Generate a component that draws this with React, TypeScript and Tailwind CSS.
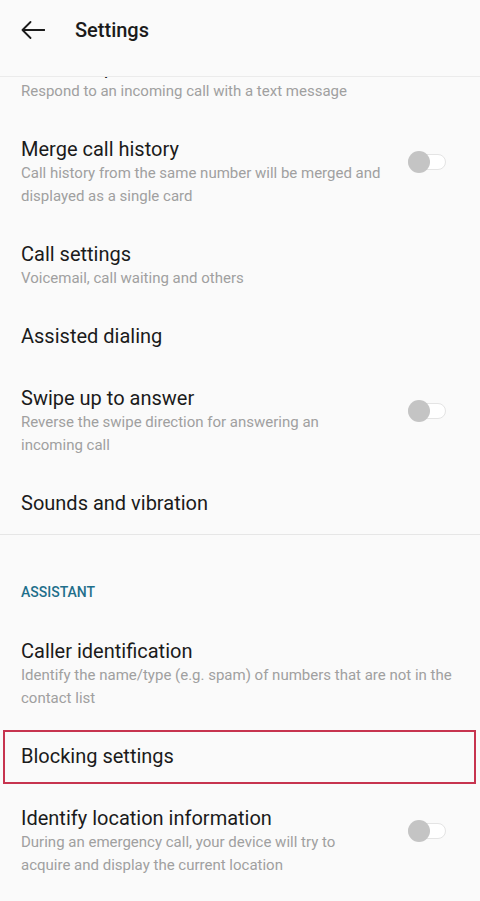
import React from "react";

type Item = {
  title: string;
  sub?: string;
  toggle?: boolean;
  boxed?: boolean;
};

const Toggle: React.FC = () => (
  <div className="relative w-[38px] h-[22px] mb-[20px] flex items-center shrink-0">
    <div className="w-[38px] h-[16px] rounded-full border-[1.5px] border-[#e4e4e4] bg-white" />
    <div className="absolute left-0 top-0 w-[22px] h-[22px] rounded-full bg-[#c4c4c4]" />
  </div>
);

const Row: React.FC<{ item: Item }> = ({ item }) => (
  <div
    className={`relative flex items-center justify-between pl-[21px] pt-[18px] ${
      item.sub ? "pb-[15px]" : "pb-[18px]"
    } ${item.toggle ? "pr-[34px]" : "pr-[10px]"}`}
  >
    <div className={item.toggle ? "w-[362px]" : "w-[440px]"}>
      <div className="text-[20px] leading-[26px] text-[#1b1b1b]">{item.title}</div>
      {item.sub && (
        <div className="text-[15px] leading-[23px] text-[#a0a0a0]">{item.sub}</div>
      )}
    </div>
    {item.toggle && <Toggle />}
    {item.boxed && (
      <div className="absolute left-[3px] right-[4px] top-[5px] bottom-[3px] border-2 border-[#c7344f] pointer-events-none" />
    )}
  </div>
);

const general: Item[] = [
  { title: "Quick responses", sub: "Respond to an incoming call with a text message" },
  {
    title: "Merge call history",
    sub: "Call history from the same number will be merged and displayed as a single card",
    toggle: true,
  },
  { title: "Call settings", sub: "Voicemail, call waiting and others" },
  { title: "Assisted dialing" },
  {
    title: "Swipe up to answer",
    sub: "Reverse the swipe direction for answering an incoming call",
    toggle: true,
  },
  { title: "Sounds and vibration" },
];

const assistant: Item[] = [
  {
    title: "Caller identification",
    sub: "Identify the name/type (e.g. spam) of numbers that are not in the contact list",
  },
  { title: "Blocking settings", boxed: true },
  {
    title: "Identify location information",
    sub: "During an emergency call, your device will try to acquire and display the current location",
    toggle: true,
  },
];

export default function App() {
  return (
    <div
      className="w-[480px] h-[901px] bg-[#fafafa] flex flex-col overflow-hidden"
      style={{ fontFamily: "Roboto, 'Noto Sans', sans-serif" }}
    >
      <header className="h-[77px] shrink-0 flex items-center pl-[21px] pb-[16px] border-b border-[#ebebeb] relative z-10 bg-[#fafafa]">
        <svg width="24" height="18" viewBox="0 0 24 18" fill="none" className="shrink-0">
          <path d="M23.5 9H1.5M9.5 1L1.5 9l8 8" stroke="#1b1b1b" strokeWidth="1.8" strokeLinecap="round" strokeLinejoin="round" />
        </svg>
        <h1 className="ml-[30px] text-[20px] font-medium text-[#1b1b1b]">Settings</h1>
      </header>
      <div className="flex-1 overflow-hidden">
        <div className="-mt-[41px]">
          {general.map((item) => (
            <Row key={item.title} item={item} />
          ))}
          <div className="h-px bg-[#e6e6e6]" />
          <div className="pl-[21px] pt-[47px] pb-[18px] text-[14px] leading-[20px] font-medium text-[#1f6f8b]">
            ASSISTANT
          </div>
          {assistant.map((item) => (
            <Row key={item.title} item={item} />
          ))}
        </div>
      </div>
    </div>
  );
}
